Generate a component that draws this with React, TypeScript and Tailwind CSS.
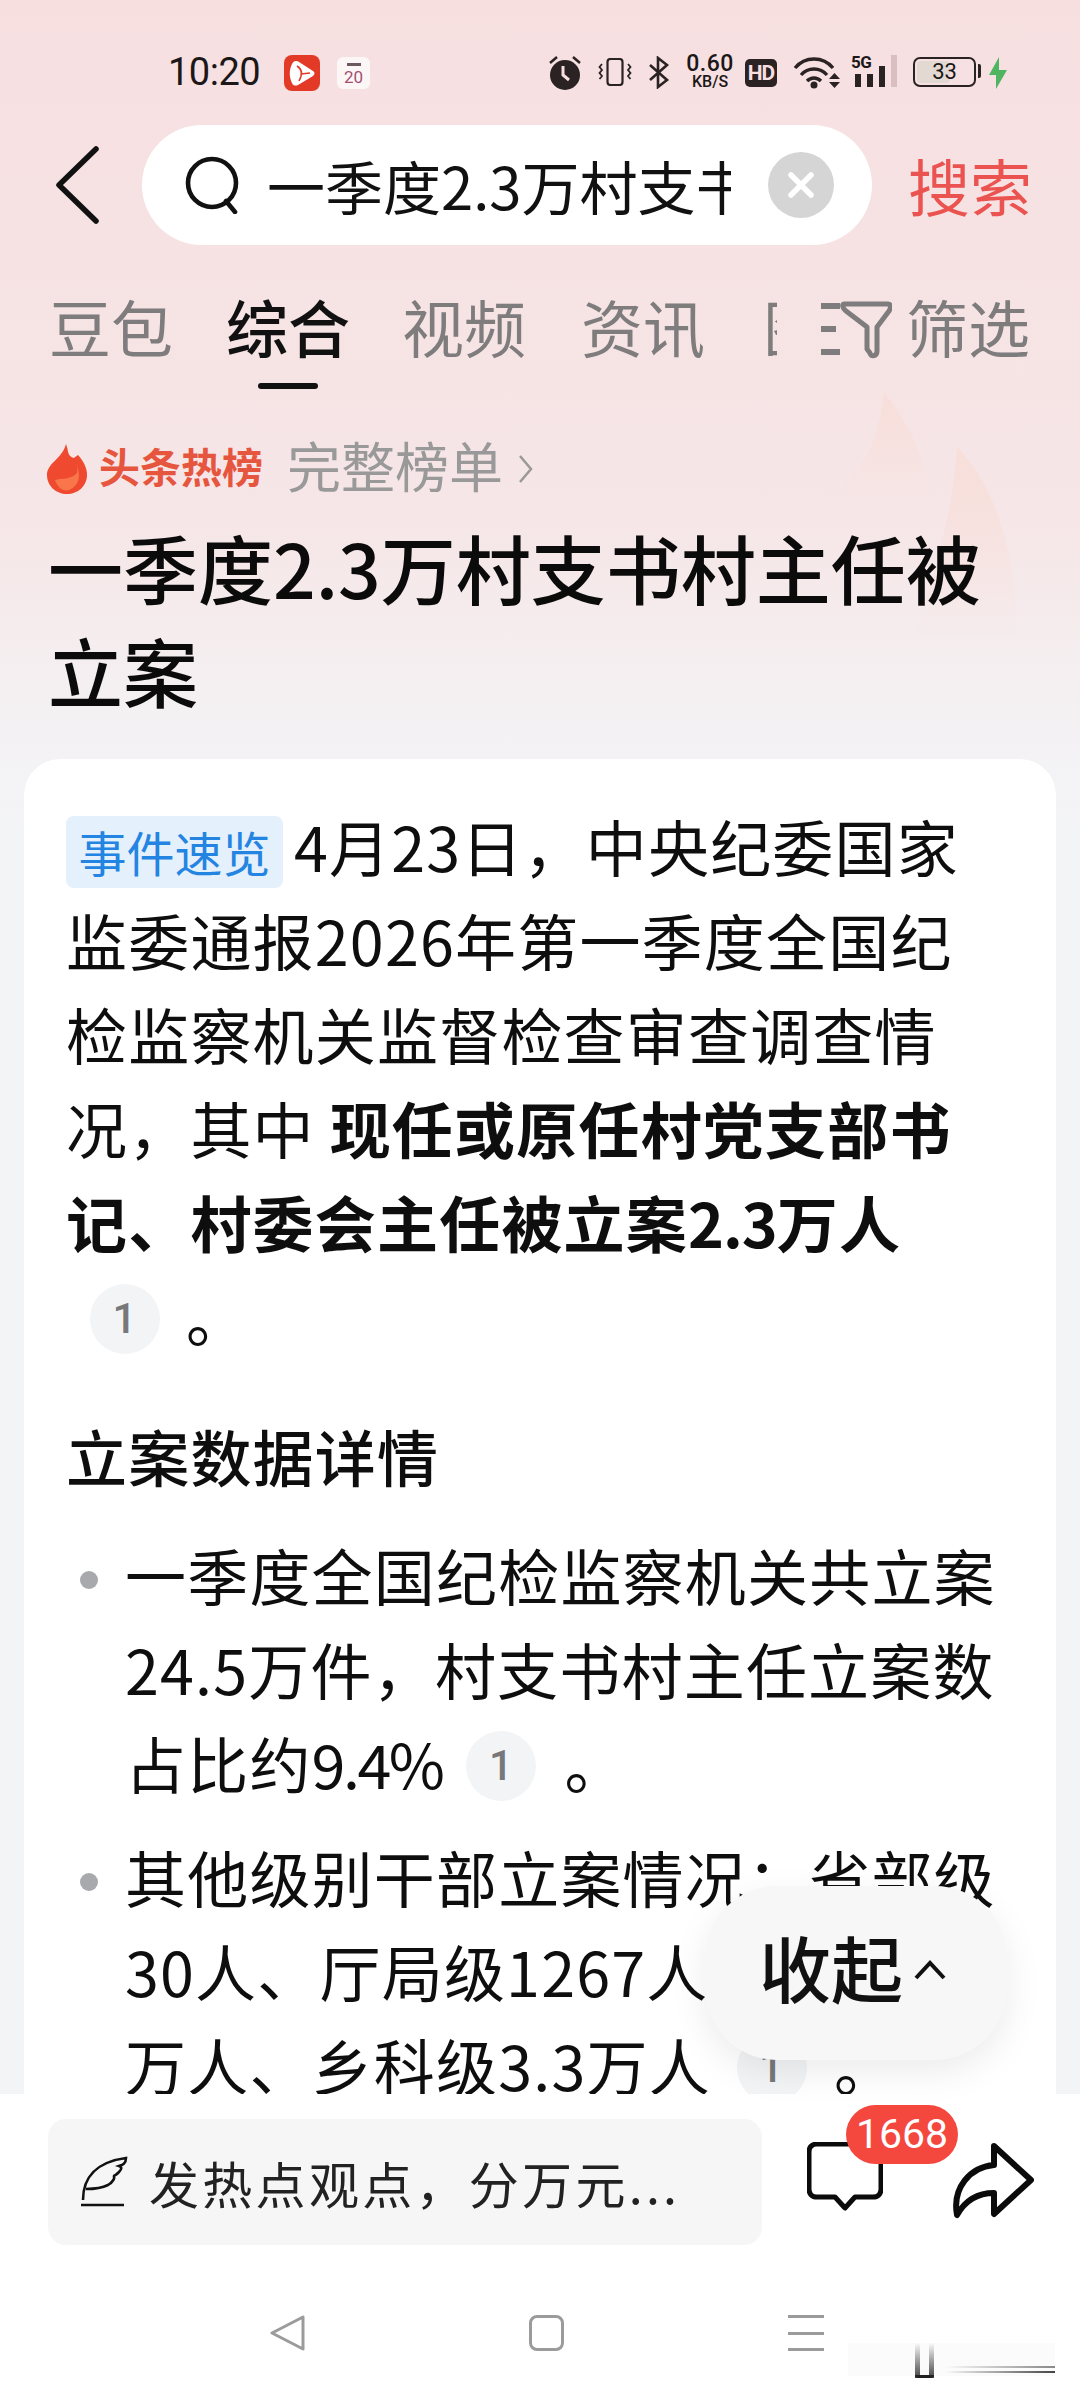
import React from "react";

const CJK = "font-['Noto_Sans_CJK_SC',sans-serif]";

const StatusBar = () => (
  <div className="h-[125px] pt-[54px] flex items-start font-['Roboto',sans-serif] text-[#1c1718]">
    <span className="ml-[168px] w-[96px] text-[38px] leading-[36px] tracking-[-0.5px]">10:20</span>
    <svg className="ml-[20px] mt-px" width="36" height="36" viewBox="0 0 36 36">
      <rect width="36" height="36" rx="8" fill="#e23a26" />
      <path d="M12 6 C10 6 9 7 8 9 C5 15 5 22 8 28 C9 31 12 31 14 30 L29 21 C31 19 31 17 29 16 L15 7 C14 6 13 6 12 6Z" fill="#fff" />
      <path d="M13 11 C18 14 19 19 15 26 M17 19 L26 18" stroke="#e23a26" strokeWidth="1.5" fill="none" />
    </svg>
    <div className="ml-[17px] mt-[3px] w-[33px] h-[32px] rounded-[6px] bg-[#fdf6f7] flex flex-col items-center">
      <span className="h-[3px] w-[14px] mt-[6px] bg-[#6d5a5e]" />
      <span className="text-[17px] leading-[20px] mt-px text-[#a5506e]">20</span>
    </div>
    <svg className="ml-[178px] mt-px" width="34" height="36" viewBox="0 0 34 36">
      <path d="M2 8 L9 2 M32 8 L25 2" stroke="#2a2223" strokeWidth="2.5" />
      <circle cx="17" cy="20" r="15" fill="#2a2223" />
      <path d="M15 11 V20 L21 25" stroke="#f7dfe0" strokeWidth="3" fill="none" />
    </svg>
    <svg className="ml-[16px] mt-[4px]" width="34" height="28" viewBox="0 0 34 28">
      <rect x="9.5" y="1" width="15" height="26" rx="3" fill="none" stroke="#2a2223" strokeWidth="2.2" />
      <path d="M4 6 L1.5 9 L4 12 L1.5 15 L4 18 L1.5 21 M30 6 L32.5 9 L30 12 L32.5 15 L30 18 L32.5 21" stroke="#2a2223" strokeWidth="1.8" fill="none" />
    </svg>
    <svg className="ml-[16px] mt-[2px]" width="22" height="33" viewBox="0 0 22 33">
      <path d="M2 9 L19 24 L10 31 V2 L19 9 L2 24" stroke="#2a2223" strokeWidth="2.6" fill="none" />
    </svg>
    <div className="ml-[13px] w-[54px] flex flex-col items-center font-medium">
      <span className="text-[23px] leading-[20px] tracking-[0.5px]">0.60</span>
      <span className="text-[16px] leading-[15px]">KB/S</span>
    </div>
    <span className="ml-[8px] mt-[5px] w-[32px] h-[28px] rounded-[5px] bg-[#2a2223] text-[#f7dfe0] text-[21px] leading-[28px] font-bold text-center tracking-[-1px]">HD</span>
    <svg className="ml-[16px] mt-[1px]" width="48" height="34" viewBox="0 0 48 34">
      <path d="M2 13 C12 1 30 1 40 13 M8 20 C15 12 27 12 34 20 M14 26 C18 22 24 22 28 26" stroke="#2a2223" strokeWidth="3.4" fill="none" />
      <circle cx="21" cy="30" r="3.5" fill="#2a2223" />
      <path d="M36 24 H47 L41.5 18Z M36 27 H47 L41.5 33Z" fill="#2a2223" />
    </svg>
    <div className="ml-[10px] relative w-[50px] h-[34px]">
      <span className="absolute left-0 top-0 text-[17px] leading-[16px] font-bold tracking-[-0.5px]">5G</span>
      <svg className="absolute left-0 top-0" width="50" height="34" viewBox="0 0 50 34">
        <rect x="4" y="20" width="6" height="13" fill="#2a2223" />
        <rect x="16" y="20" width="6" height="13" fill="#2a2223" />
        <rect x="28" y="12" width="6" height="21" fill="#2a2223" />
        <rect x="40" y="1" width="6" height="32" fill="#d9bfc1" />
      </svg>
    </div>
    <div className="ml-[12px] mt-[3px] w-[63px] h-[30px] rounded-[7px] border-2 border-[#2a2223] relative">
      <div className="absolute left-[2px] top-[2px] bottom-[2px] w-[33px] rounded-[4px] bg-[#e2dad2]" />
      <span className="absolute inset-0 text-center text-[22px] leading-[26px]">33</span>
    </div>
    <span className="ml-[2px] mt-[10px] w-[3px] h-[14px] bg-[#2a2223] rounded-r-[2px]" />
    <svg className="ml-[7px] mt-[3px]" width="20" height="32" viewBox="0 0 20 32">
      <path d="M11 0 L1 18 H8 L8 32 L19 13 H11Z" fill="#4fb560" />
    </svg>
  </div>
);

const SearchRow = () => (
  <div className="h-[120px] flex items-center">
    <svg className="ml-[54px]" width="46" height="78" viewBox="0 0 46 78">
      <path d="M42 3 L5 39 L42 75" stroke="#111" strokeWidth="5.5" fill="none" strokeLinecap="round" strokeLinejoin="round" />
    </svg>
    <div className="ml-[42px] w-[730px] h-[120px] rounded-full bg-white flex items-center">
      <svg className="ml-[43px] shrink-0" width="58" height="58" viewBox="0 0 58 58">
        <circle cx="27" cy="27" r="24" stroke="#111" strokeWidth="4.6" fill="none" />
        <path d="M41 45 L50 56" stroke="#111" strokeWidth="4.6" strokeLinecap="round" />
      </svg>
      <div className="ml-[24px] w-[464px] overflow-hidden whitespace-nowrap text-[58px] leading-[70px] text-[#111]">一季度2.3万村支书</div>
      <div className="ml-[37px] w-[66px] h-[66px] rounded-full bg-[#d5d5d5] flex items-center justify-center">
        <svg width="32" height="32" viewBox="0 0 32 32">
          <path d="M6 6 L26 26 M26 6 L6 26" stroke="#fff" strokeWidth="5.5" strokeLinecap="round" />
        </svg>
      </div>
    </div>
    <span className="ml-[36px] text-[62px] leading-[70px] text-[#ea5350]">搜索</span>
  </div>
);

const Tabs = () => (
  <div className="mt-[51px] h-[93px] flex items-start text-[62px] leading-[60px] text-[#7e7c7d]">
    <span className="ml-[49px]">豆包</span>
    <div className="ml-[53px] flex flex-col items-center">
      <span className="font-medium text-[#111]">综合</span>
      <span className="mt-[27px] w-[60px] h-[6px] rounded-full bg-[#111]" />
    </div>
    <span className="ml-[52px]">视频</span>
    <span className="ml-[55px]">资讯</span>
    <div className="ml-[58px] w-[14px] overflow-hidden whitespace-nowrap">图片</div>
    <svg className="ml-[43px] mt-[3px]" width="72" height="60" viewBox="0 0 72 60">
      <path d="M1 7 H20 M1 30 H16 M1 53 H20" stroke="#7e7c7d" strokeWidth="6" />
      <path d="M24 5 H68 C71 5 71 9 69 12 L57 28 V52 C57 58 50 58 50 54 L47 50 V28 L26 12 C22 9 22 5 24 5Z" stroke="#7e7c7d" strokeWidth="5" fill="none" strokeLinejoin="round" />
    </svg>
    <span className="ml-[14px]">筛选</span>
  </div>
);

const HotRow = () => (
  <div className="mt-[49px] h-[53px] flex items-center">
    <svg className="ml-[47px] mt-[8px]" width="40" height="50" viewBox="0 0 40 50">
      <path d="M19 0 C22 8 20 12 27 14 C29 12 30 12 31 11 C37 18 40 24 40 31 C40 42 31 50 20 50 C9 50 0 42 0 31 C0 19 15 15 19 0Z" fill="#ef4a2f" />
      <path d="M8 36 C14 34 24 36 30 29 C31 24 30 20 29 18 C32 26 36 40 22 46 C15 48 10 42 8 36Z" fill="#f8764a" />
    </svg>
    <span className="ml-[12px] text-[41px] leading-[50px] font-bold text-[#e6563f]">头条热榜</span>
    <span className="ml-[24px] text-[54px] leading-[53px] text-[#999]">完整榜单</span>
    <svg className="ml-[15px] mt-[8px]" width="16" height="32" viewBox="0 0 16 32">
      <path d="M2 3 L13 16 L2 29" stroke="#999" strokeWidth="2.5" fill="none" />
    </svg>
  </div>
);

const Chip = ({ className }: { className: string }) => (
  <span className={`w-[70px] h-[70px] rounded-full bg-[#f3f4f6] text-[#77787b] text-[42px] leading-[70px] text-center font-['Roboto',sans-serif] font-medium ${className}`}>1</span>
);

const Line = ({ children }: { children: React.ReactNode }) => (
  <div className="h-[94px] flex items-center whitespace-nowrap">{children}</div>
);

const Bullet = ({ lines }: { lines: React.ReactNode[] }) => (
  <div className="flex">
    <span className="mt-[43px] ml-[14px] w-[18px] h-[18px] rounded-full bg-[#a8a9ac]" />
    <div className="ml-[27px]">
      {lines.map((l, i) => <Line key={i}>{l}</Line>)}
    </div>
  </div>
);

const Card = () => (
  <div className="mt-[38px] mx-[24px] rounded-t-[36px] bg-white pl-[42px] pt-[40px] text-[61px] text-[#0e0e0e] tracking-[1.2px]">
    <Line>
      <span className="mt-[12px] w-[217px] h-[72px] rounded-[8px] bg-[#e4f0fb] text-[#2384e2] text-[48px] leading-[70px] text-center tracking-normal">事件速览</span>
      <span className="ml-[11px]">4月23日，中央纪委国家</span>
    </Line>
    <Line>监委通报2026年第一季度全国纪</Line>
    <Line>检监察机关监督检查审查调查情</Line>
    <Line>况，其中&nbsp;<b className="font-bold">现任或原任村党支部书</b></Line>
    <Line><b className="font-bold">记、村委会主任被立案<span className="tracking-[-1px]">2.3</span>万人</b></Line>
    <Line>
      <Chip className="ml-[24px] mt-[5px]" />
      <span className="ml-[26px]">。</span>
    </Line>
    <div className="mt-[46px] h-[94px] flex items-center font-medium">立案数据详情</div>
    <div className="mt-[25px] flex flex-col gap-[20px]">
      <Bullet lines={[
        "一季度全国纪检监察机关共立案",
        "24.5万件，村支书村主任立案数",
        <>占比约<span className="tracking-[-2.5px]">9.4%</span><Chip className="ml-[24px] mt-[5px]" /><span className="ml-[28px]">。</span></>,
      ]} />
      <Bullet lines={[
        "其他级别干部立案情况：省部级",
        "30人、厅局级1267人",
        <>万人、乡科级3.3万人<Chip className="ml-[26px] mt-[5px]" /><span className="ml-[27px]">。</span></>,
      ]} />
    </div>
  </div>
);

const BottomBar = () => (
  <div className="h-[306px] shrink-0 bg-white">
    <div className="pt-[25px] h-[151px] flex items-start">
      <div className="ml-[48px] w-[714px] h-[126px] rounded-[18px] bg-[#f6f6f7] flex items-center">
        <svg className="ml-[32px]" width="48" height="52" viewBox="0 0 48 52">
          <path d="M3 44 C3 22 16 6 46 2 C46 8 42 9 39 10 C42 11 42 13 39 16 C36 19 34 20 33 20 C36 21 33 26 28 29 C22 32 14 33 6 33" stroke="#111" strokeWidth="2.6" fill="none" />
          <path d="M1 49 H44" stroke="#111" strokeWidth="2.6" />
        </svg>
        <span className="ml-[21px] text-[50px] leading-[54px] tracking-[3.3px] text-[#222]">发热点观点，分万元...</span>
      </div>
      <div className="ml-[45px] mt-[23px] relative w-[76px] h-[70px]">
        <svg width="76" height="70" viewBox="0 0 76 70">
          <path d="M10 2 H66 C71 2 74 5 74 10 V47 C74 52 71 55 66 55 H48 L38 66 L28 55 H10 C5 55 2 52 2 47 V10 C2 5 5 2 10 2Z" stroke="#0b0b0b" strokeWidth="5" fill="none" strokeLinejoin="round" />
        </svg>
        <span className="absolute left-[39px] top-[-37px] w-[112px] h-[59px] rounded-full bg-[#f4483f] text-white text-[41px] leading-[59px] text-center font-['Roboto',sans-serif]">1668</span>
      </div>
      <svg className="ml-[69px] mt-[24px]" width="82" height="76" viewBox="0 0 82 76">
        <path d="M42 3 L79 37 L42 71 V50 C28 50 14 56 5 72 C0 45 18 24 42 22Z" stroke="#0b0b0b" strokeWidth="6" fill="none" strokeLinejoin="round" />
      </svg>
    </div>
    <div className="mt-[70px] pl-[270px] flex items-center gap-[224px]">
      <svg width="35" height="36" viewBox="0 0 35 36">
        <path d="M33 2 V34 L2 18Z" stroke="#9b9b9b" strokeWidth="3" fill="none" strokeLinejoin="round" />
      </svg>
      <span className="w-[35px] h-[36px] rounded-[8px] border-[3px] border-[#9b9b9b]" />
      <div className="w-[36px] h-[36px] flex flex-col justify-between">
        <span className="h-[3px] bg-[#9b9b9b]" />
        <span className="h-[3px] bg-[#9b9b9b]" />
        <span className="h-[3px] bg-[#9b9b9b]" />
      </div>
    </div>
  </div>
);

export default function App() {
  return (
    <div className={`relative w-[1080px] h-[2400px] overflow-hidden flex flex-col bg-white ${CJK}`}>
      <div className="relative h-[2094px] overflow-hidden shrink-0 bg-[linear-gradient(180deg,#f7dfe0_0%,#f6e6e7_25%,#f4f1f3_34%,#f3f4f6_40%)]">
        <svg className="absolute left-[800px] top-[380px]" width="240" height="340" viewBox="0 0 240 340">
          <defs>
            <linearGradient id="bgFlame" x1="0" y1="0" x2="0" y2="1">
              <stop offset="0" stopColor="#f9d8cd" stopOpacity="0.5" />
              <stop offset="0.75" stopColor="#f9d8cd" stopOpacity="0" />
            </linearGradient>
          </defs>
          <path d="M84 12 C120 60 136 100 130 150 C90 170 40 150 20 120 C60 100 80 60 84 12Z" fill="url(#bgFlame)" />
          <path d="M157 67 C200 110 225 190 216 330 L90 330 C110 260 150 170 157 67Z" fill="url(#bgFlame)" />
        </svg>
        <div className="relative">
          <StatusBar />
          <SearchRow />
          <Tabs />
          <HotRow />
          <div className="mt-[24px] ml-[48px] text-[75px] leading-[103px] font-medium text-[#0b0b0b] whitespace-nowrap">
            <div>一季度2.3万村支书村主任被</div>
            <div>立案</div>
          </div>
          <Card />
        </div>
      </div>
      <BottomBar />
      <div className="absolute left-[705px] top-[1886px] w-[302px] h-[174px] rounded-[72px] bg-[#f7f7f7] shadow-[0_12px_36px_rgba(0,0,0,0.08)] flex items-center">
        <span className="ml-[54px] mb-[14px] text-[72px] leading-[80px] font-medium text-[#111]">收起</span>
        <svg className="ml-[10px] mb-[6px]" width="34" height="24" viewBox="0 0 34 24">
          <path d="M3 20 L17 5 L31 20" stroke="#111" strokeWidth="4" fill="none" />
        </svg>
      </div>
      {/* faint watermark sitting over the nav bar */}
      <div className="absolute left-[848px] top-[2343px] w-[207px] h-[33px] bg-[#fbfbfb]">
        <div className="absolute right-0 top-[23px] w-[110px] h-[2px] bg-[linear-gradient(90deg,transparent,#888)]" />
        <div className="absolute right-0 top-[28px] w-[110px] h-[2px] bg-[linear-gradient(90deg,transparent,#444)]" />
      </div>
      <div className="absolute left-[915px] top-[2343px] w-[19px] h-[35px] flex justify-between">
        <span className="w-[5px] bg-[linear-gradient(180deg,transparent,#444)]" />
        <span className="w-[5px] bg-[linear-gradient(180deg,transparent,#444)]" />
      </div>
      <div className="absolute left-[915px] top-[2375px] w-[19px] h-[3px] rounded-b-[3px] bg-[#222]" />
    </div>
  );
}
